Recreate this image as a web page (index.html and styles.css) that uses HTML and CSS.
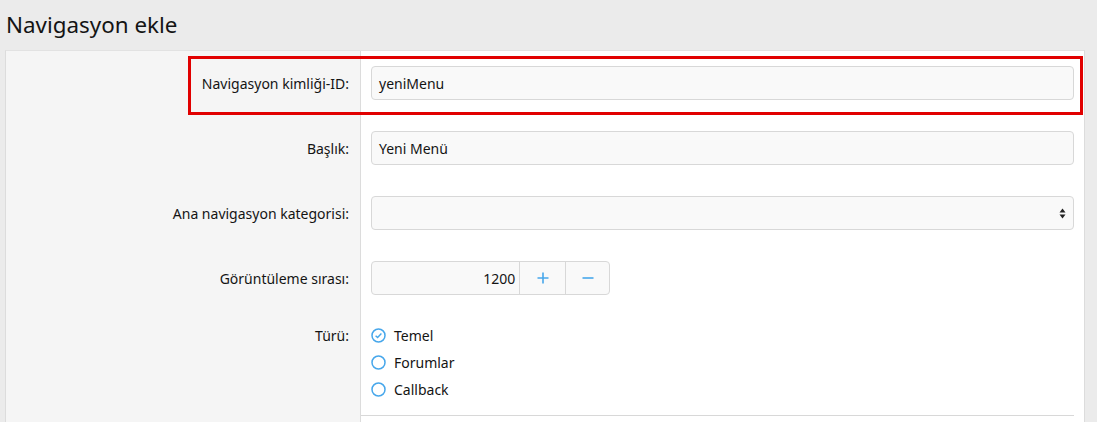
FILE: index.html
```html
<!DOCTYPE html>
<html lang="tr">
<head>
<meta charset="utf-8">
<title>Navigasyon ekle</title>
<link rel="stylesheet" href="styles.css">
</head>
<body>
<h1 class="page-title">Navigasyon ekle</h1>
<div class="panel">
  <div class="row highlighted">
    <div class="row-label">Navigasyon kimliği-ID:</div>
    <div class="row-field"><div class="input">yeniMenu</div></div>
    <div class="mark"></div>
  </div>
  <div class="row">
    <div class="row-label">Başlık:</div>
    <div class="row-field"><div class="input">Yeni Menü</div></div>
  </div>
  <div class="row">
    <div class="row-label">Ana navigasyon kategorisi:</div>
    <div class="row-field">
      <div class="input select">
        <svg class="select-arrow" width="7" height="11" viewBox="0 0 7 11"><path d="M3.5 0.5 L6.5 4.5 L0.5 4.5 Z M3.5 10.5 L6.5 6.5 L0.5 6.5 Z" fill="#222"/></svg>
      </div>
    </div>
  </div>
  <div class="row">
    <div class="row-label">Görüntüleme sırası:</div>
    <div class="row-field">
      <div class="number">
        <div class="number-value">1200</div>
        <div class="number-btn"><svg width="12" height="12" viewBox="0 0 12 12"><path d="M6 0.5 V11.5 M0.5 6 H11.5" stroke="#47a7eb" stroke-width="1.6"/></svg></div>
        <div class="number-btn"><svg width="12" height="12" viewBox="0 0 12 12"><path d="M0.5 6 H11.5" stroke="#47a7eb" stroke-width="1.6"/></svg></div>
      </div>
    </div>
  </div>
  <div class="row radios-row">
    <div class="row-label radio-label">Türü:</div>
    <div class="row-field radios">
      <div class="radio">
        <svg width="15" height="15" viewBox="0 0 15 15"><circle cx="7.5" cy="7.5" r="6.5" fill="none" stroke="#47a7eb" stroke-width="1.5"/><path d="M4.6 7.7 L6.6 9.6 L10.4 5.6" fill="none" stroke="#47a7eb" stroke-width="1.4"/></svg>
        <span>Temel</span>
      </div>
      <div class="radio">
        <svg width="15" height="15" viewBox="0 0 15 15"><circle cx="7.5" cy="7.5" r="6.5" fill="none" stroke="#47a7eb" stroke-width="1.5"/></svg>
        <span>Forumlar</span>
      </div>
      <div class="radio">
        <svg width="15" height="15" viewBox="0 0 15 15"><circle cx="7.5" cy="7.5" r="6.5" fill="none" stroke="#47a7eb" stroke-width="1.5"/></svg>
        <span>Callback</span>
      </div>
    </div>
  </div>
  <div class="row footer-row">
    <div class="row-label"></div>
    <div class="row-field"><div class="separator"></div></div>
  </div>
</div>
</body>
</html>
```
FILE: styles.css
```css
* { box-sizing: border-box; }
html, body { margin: 0; padding: 0; }
body {
  background: #ebebeb;
  font-family: "Noto Sans", "Open Sans", "DejaVu Sans", sans-serif;
  color: #141414;
  font-size: 14px;
  overflow: hidden;
}
.page-title {
  margin: 0;
  padding: 9px 0 0 6px;
  height: 50px;
  font-size: 22.4px;
  font-weight: 400;
  line-height: 32px;
  color: #141414;
}
.panel {
  margin-left: 5px;
  width: 1080px;
  border-left: 1px solid #dcdcdc;
  border-right: 1px solid #dcdcdc;
  border-top: 1px solid #e2e2e2;
  background: #fff;
}
.row {
  display: grid;
  grid-template-columns: 355px 1fr;
  position: relative;
}
.row-label {
  background: #f5f5f5;
  border-right: 1px solid #dcdcdc;
  text-align: right;
  padding: 15px 11px 16px 10px;
  display: flex;
  align-items: center;
  justify-content: flex-end;
}
.row-field {
  padding: 15px 10px 16px 10px;
}
.input {
  height: 34px;
  border: 1px solid #d8d8d8;
  border-radius: 4px;
  background: #f9f9f9;
  padding: 0 7px;
  display: flex;
  align-items: center;
  position: relative;
}
.select { justify-content: flex-end; }
.mark {
  position: absolute;
  left: 182px;
  top: 5px;
  width: 895px;
  height: 59px;
  border: 3px solid #e10000;
  pointer-events: none;
}
.number {
  display: flex;
  width: 239px;
  height: 34px;
  border: 1px solid #d8d8d8;
  border-radius: 4px;
  background: #f9f9f9;
}
.number-value {
  width: 149px;
  padding-right: 4px;
  display: flex;
  align-items: center;
  justify-content: flex-end;
  border-right: 1px solid #d8d8d8;
}
.number-btn {
  width: 45px;
  display: flex;
  align-items: center;
  justify-content: center;
}
.number-btn + .number-btn { border-left: 1px solid #d8d8d8; width: 44px; }
.radios-row .row-label { align-items: flex-start; padding-top: 11px; line-height: 27px; }
.radios { padding: 11px 10px 12px 10px; }
.radio {
  height: 27px;
  display: flex;
  align-items: center;
  gap: 8px;
  padding-left: 0;
}
.footer-row .row-label { padding: 0; }
.footer-row .row-field { padding: 0 10px 0 0; height: 8px; }
.separator { border-top: 1px solid #d8d8d8; }
```
